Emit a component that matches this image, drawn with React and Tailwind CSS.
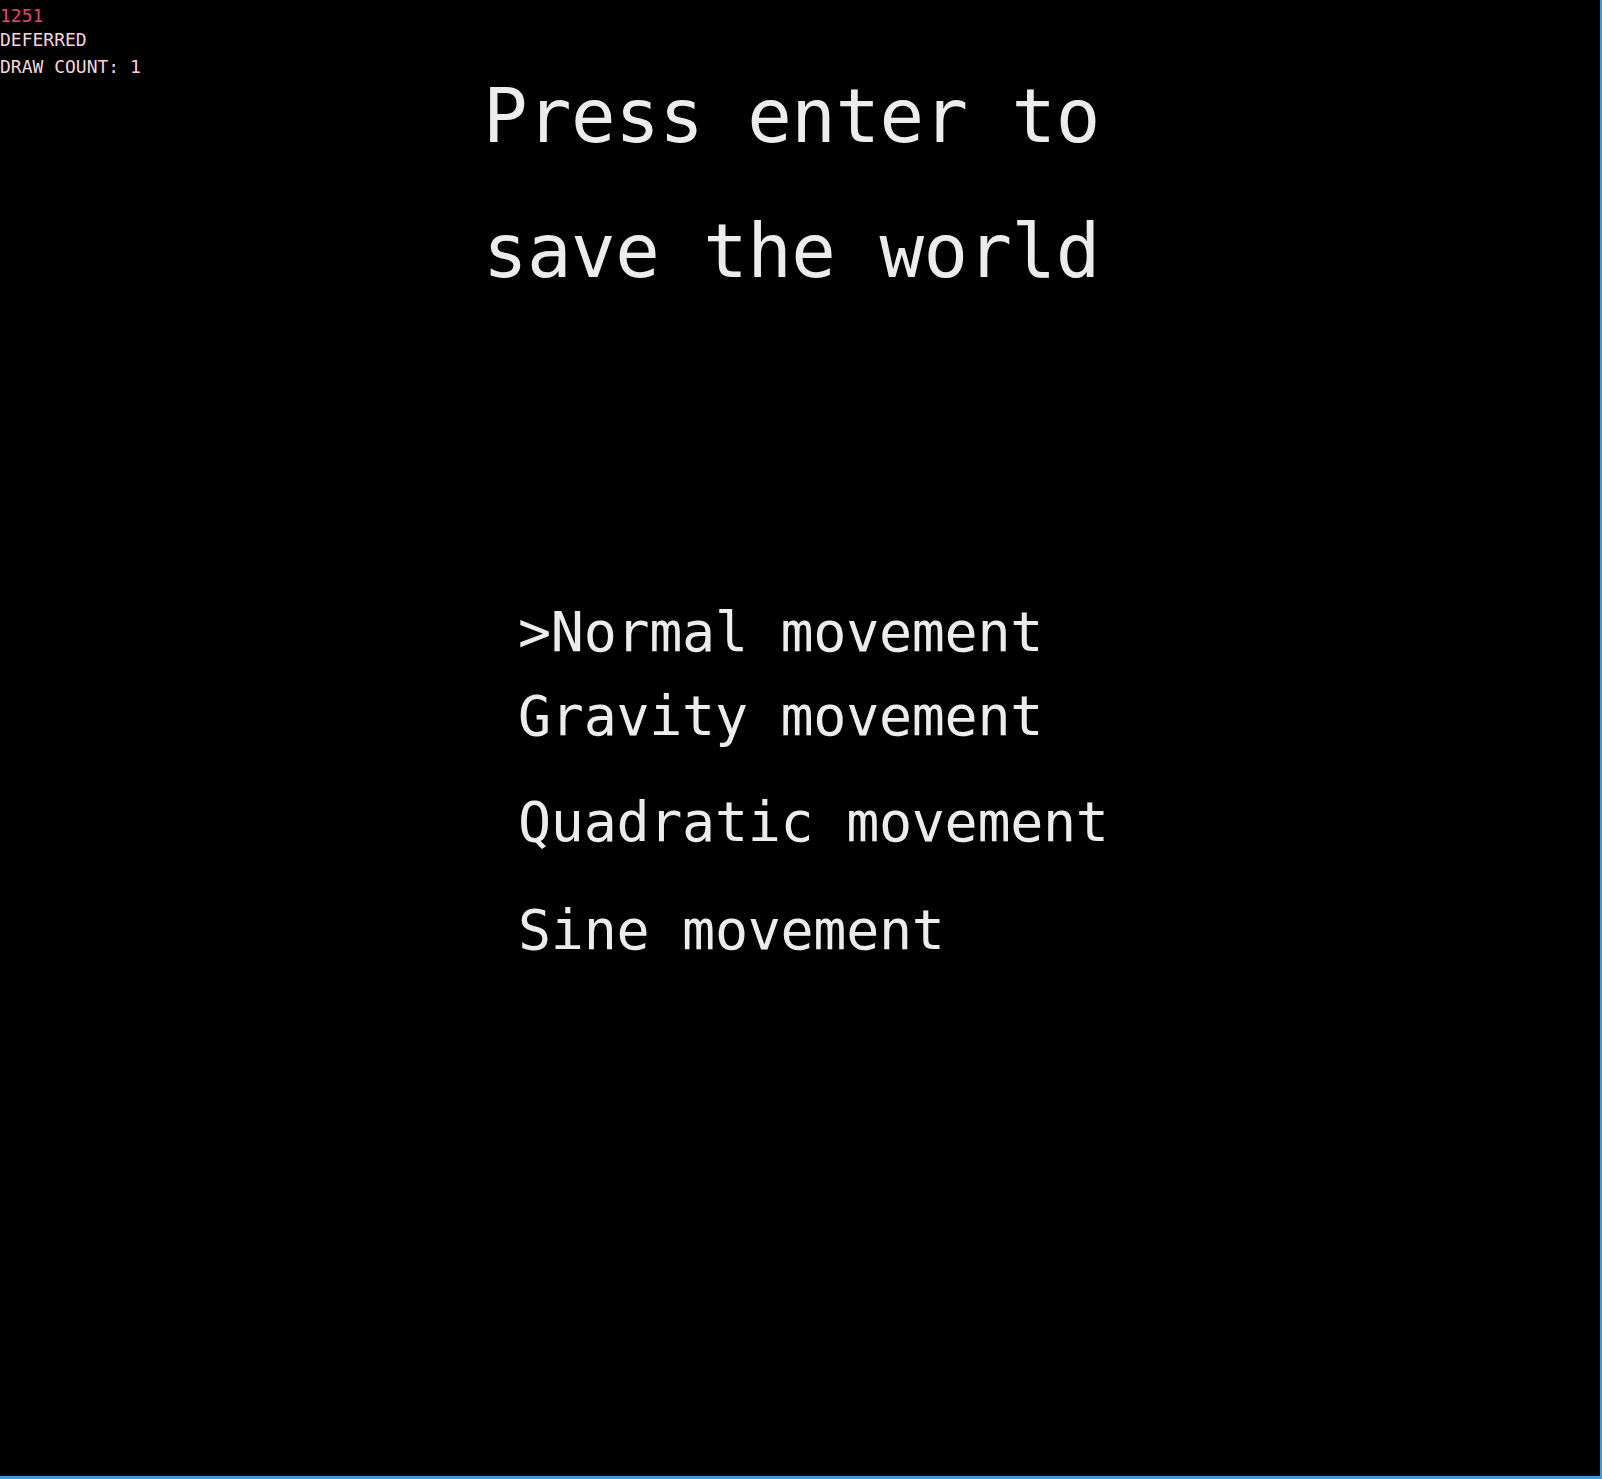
export default function App() {
  const mono = { fontFamily: '"DejaVu Sans Mono", "Liberation Mono", monospace' };
  return (
    <div className="w-[1602px] h-[1479px] bg-[#3a9fd8] overflow-hidden" style={mono}>
      <div className="relative w-[1600px] h-[1476px] bg-black">
        {/* debug overlay */}
        <div className="absolute left-0 top-[4px] text-[18px] leading-[24px]">
          <div className="text-[#e2457c]">1251</div>
          <div className="text-[#f5d5dd]">DEFERRED</div>
          <div className="text-[#f5d5dd] mt-[3px]">DRAW COUNT: 1</div>
        </div>

        <div className="flex flex-col">
          <div className="pt-[49px] pl-[483px] text-[74px] leading-[135px] tracking-[-0.5px] text-[#ececec] whitespace-pre">
            <div>Press enter to</div>
            <div>save the world</div>
          </div>

          <div className="mt-[283px] pl-[518px] text-[55px] leading-[60px] tracking-[-0.3px] text-[#ececec] whitespace-pre flex flex-col">
            <div>&gt;Normal movement</div>
            <div className="mt-[24px]">Gravity movement</div>
            <div className="mt-[46px]">Quadratic movement</div>
            <div className="mt-[48px]">Sine movement</div>
          </div>
        </div>
      </div>
    </div>
  );
}
